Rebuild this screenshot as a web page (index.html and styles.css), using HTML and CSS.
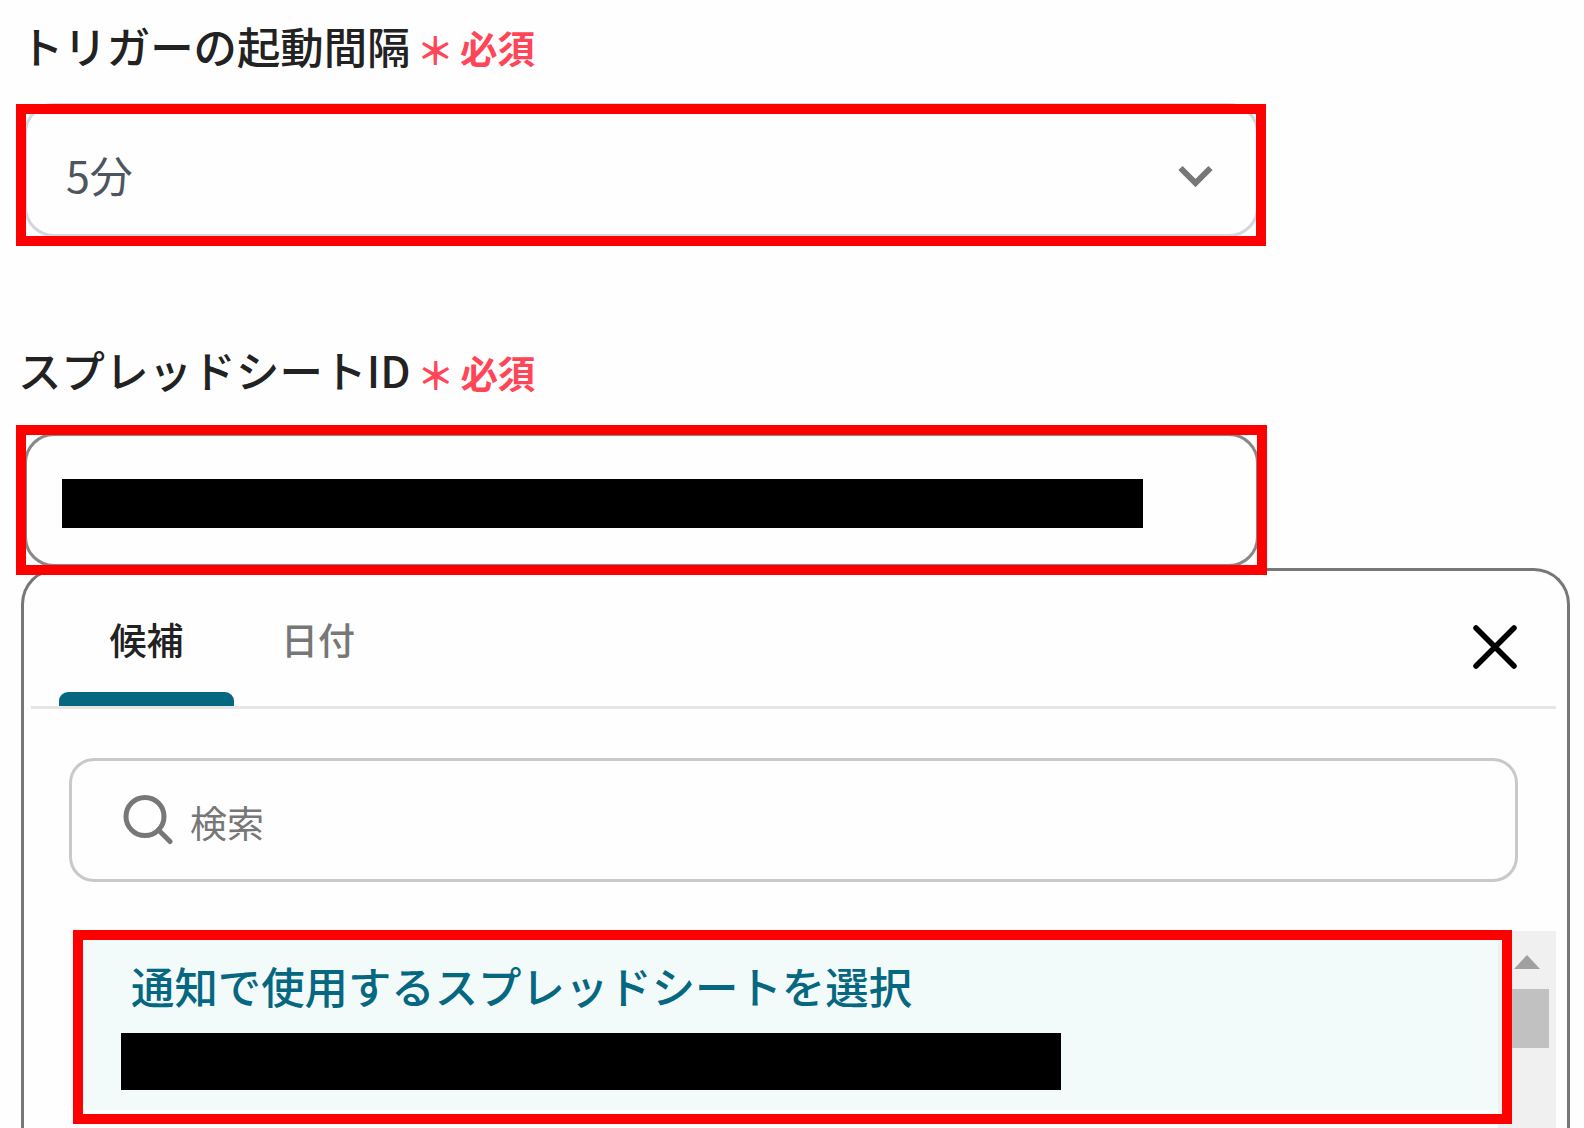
FILE: index.html
```html
<!DOCTYPE html>

<html lang="ja">
  <head>
    <title>トリガーの設定</title>
    <meta charset="utf-8"/>
    <meta name="viewport" content="width=device-width, initial-scale=1"/>

    <link rel="stylesheet" href="styles.css">
  </head>
  <body>
    <div class="label interval-label">
      <span class="name">トリガーの起動間隔</span>
      <span class="star">＊</span>
      <span class="required">必須</span>
    </div>

    <div class="field interval">
      <span class="value">5分</span>
      <svg class="chevron" width="35" height="22" viewBox="0 0 35 22">
        <path d="M2.500 3L17.500 18L32.500 3"/>
      </svg>
      <div class="mark"></div>
    </div>

    <div class="label sheet-label">
      <span class="name">スプレッドシートID</span>
      <span class="star">＊</span>
      <span class="required">必須</span>
    </div>

    <div class="field sheet">
      <div class="masked"></div>
      <div class="mark"></div>
    </div>

    <div class="panel">
      <div class="tabs">
        <div class="tab active">候補</div>
        <div class="tab">日付</div>
        <svg class="close" width="44" height="44" viewBox="0 0 44 44">
          <path d="M3 3L41 41M41 3L3 41"/>
        </svg>
      </div>

      <div class="search">
        <svg width="50" height="50" viewBox="0 0 50 50">
          <circle cx="22" cy="21.5" r="19"/>
          <path d="M35.500 35L47 46.500"/>
        </svg>
        <span>検索</span>
      </div>

      <div class="list">
        <div class="option">
          <div class="title">通知で使用するスプレッドシートを選択</div>
          <div class="masked"></div>
          <div class="mark"></div>
        </div>
        <div class="scrollbar">
          <div class="arrow"></div>
          <div class="thumb"></div>
        </div>
      </div>
    </div>
  </body>
</html>
```

FILE: styles.css
```css
html {height: 100%;}
* {box-sizing: border-box;}
body {
  display: flex;
  flex-direction: column;
  height: 100%;
  margin: 0;
  overflow: hidden;
  font-family: "Noto Sans CJK JP", sans-serif;
  background: #fefefe;
  color: #222;
}

svg {
  fill: none;
  stroke: #777;
  flex: none;
}

/* labels */
.label {
  display: flex;
  flex: none;
  align-items: center;
  font-weight: 500;
  white-space: nowrap;
}
.label .name {
  font-size: 43.4px;
  line-height: 60px;
}
.label .star,
.label .required {
  color: #ff4658;
  font-size: 37.5px;
  font-weight: 700;
  line-height: 50px;
}
.label .star {
  margin-left: 6px;
  padding-top: 8px;
}
.label .required {
  margin-left: 6px;
  padding-top: 4px;
}

.interval-label {
  height: 60px;
  margin: 15px 0 0 20px;
}
.sheet-label {
  height: 60px;
  margin: 102px 0 0 18px;
}
.sheet-label .name {letter-spacing: 0.2px;}
.sheet-label .star {padding-top: 10px;}
.sheet-label .required {padding-top: 6px;}

/* inputs */
.field {
  position: relative;
  display: flex;
  flex: none;
  align-items: center;
  width: 1235px;
  margin-left: 24px;
  border: 3px solid #d3d7dd;
  border-radius: 30px;
  background: #fefefe;
}
.interval {
  height: 134px;
  margin-top: 28px;
  padding: 8px 43px 0 39px;
  justify-content: space-between;
}
.interval .value {
  color: #4d565f;
  font-size: 43px;
  line-height: 60px;
  padding-bottom: 1px;
}
.chevron {
  margin-top: 4px;
  stroke-width: 6;
}
.sheet {
  z-index: 2;
  height: 134px;
  margin-top: 34px;
  padding-left: 35px;
  border-color: #888;
}

.masked {
  background: #000;
}
.sheet .masked {
  width: 1081px;
  height: 49px;
  margin-top: 6px;
}

/* highlight frames, drawn over the fields */
.mark {
  position: absolute;
  z-index: 3;
  border: 10px solid #f00;
}
.interval .mark {
  top: -2px;
  left: -11px;
  width: 1250px;
  height: 142px;
}
.sheet .mark {
  top: -11px;
  left: -11px;
  width: 1251px;
  height: 150px;
}
.option .mark {
  top: -1px;
  left: 3px;
  width: 1439px;
  height: 194px;
}

/* suggestions */
.panel {
  flex: 1;
  width: 1549px;
  min-height: 0;
  margin: 1px 0 0 21px;
  padding: 0 11px 0 7px;
  overflow: hidden;
  border: 3px solid #777;
  border-bottom: none;
  border-radius: 36px 36px 0 0;
}
.tabs {
  display: flex;
  align-items: flex-start;
  height: 138px;
  padding-left: 28px;
  border-bottom: 3px solid #e6e6e6;
}
.tab {
  width: 168px;
  height: 138px;
  padding-top: 43px;
  color: #777;
  font-size: 37px;
  font-weight: 500;
  line-height: 50px;
  text-align: center;
}
.tab.active {
  width: 175px;
  color: #222;
}
.tab.active::after {
  content: "";
  display: block;
  height: 14px;
  margin-top: 28px;
  border-radius: 9px 9px 0 0;
  background: #056780;
}
.close {
  margin: 54px 39px 0 auto;
  stroke: #000;
  stroke-width: 5.5;
  stroke-linecap: round;
}

.search {
  display: flex;
  align-items: center;
  gap: 17px;
  width: 1449px;
  height: 124px;
  margin: 49px 0 0 38px;
  padding-left: 51px;
  border: 3px solid #c9c9c9;
  border-radius: 25px;
  color: #777;
  font-size: 37px;
  line-height: 50px;
}
.search svg {
  stroke-width: 5;
  stroke-linecap: round;
}
.search span {padding-top: 3px;}

.list {
  display: flex;
  width: 1486px;
  height: 197px;
  margin: 49px 0 0 39px;
}
.option {
  position: relative;
  width: 1428px;
  height: 179px;
  padding: 24px 0 0 51px;
  background: #f2fafa;
}
.title {
  padding-left: 10px;
  color: #056780;
  font-size: 43.4px;
  font-weight: 500;
  line-height: 60px;
  white-space: nowrap;
}
.option .masked {
  width: 940px;
  height: 57px;
  margin-top: 18px;
}
.scrollbar {
  display: flex;
  flex-direction: column;
  width: 58px;
  padding: 24px 7px 0;
  background: #f0f0f0;
}
.scrollbar .arrow {
  align-self: center;
  border: 13px solid transparent;
  border-top: none;
  border-bottom: 14px solid #a0a0a0;
}
.scrollbar .thumb {
  height: 59px;
  margin-top: 20px;
  background: #c1c1c1;
}
```
